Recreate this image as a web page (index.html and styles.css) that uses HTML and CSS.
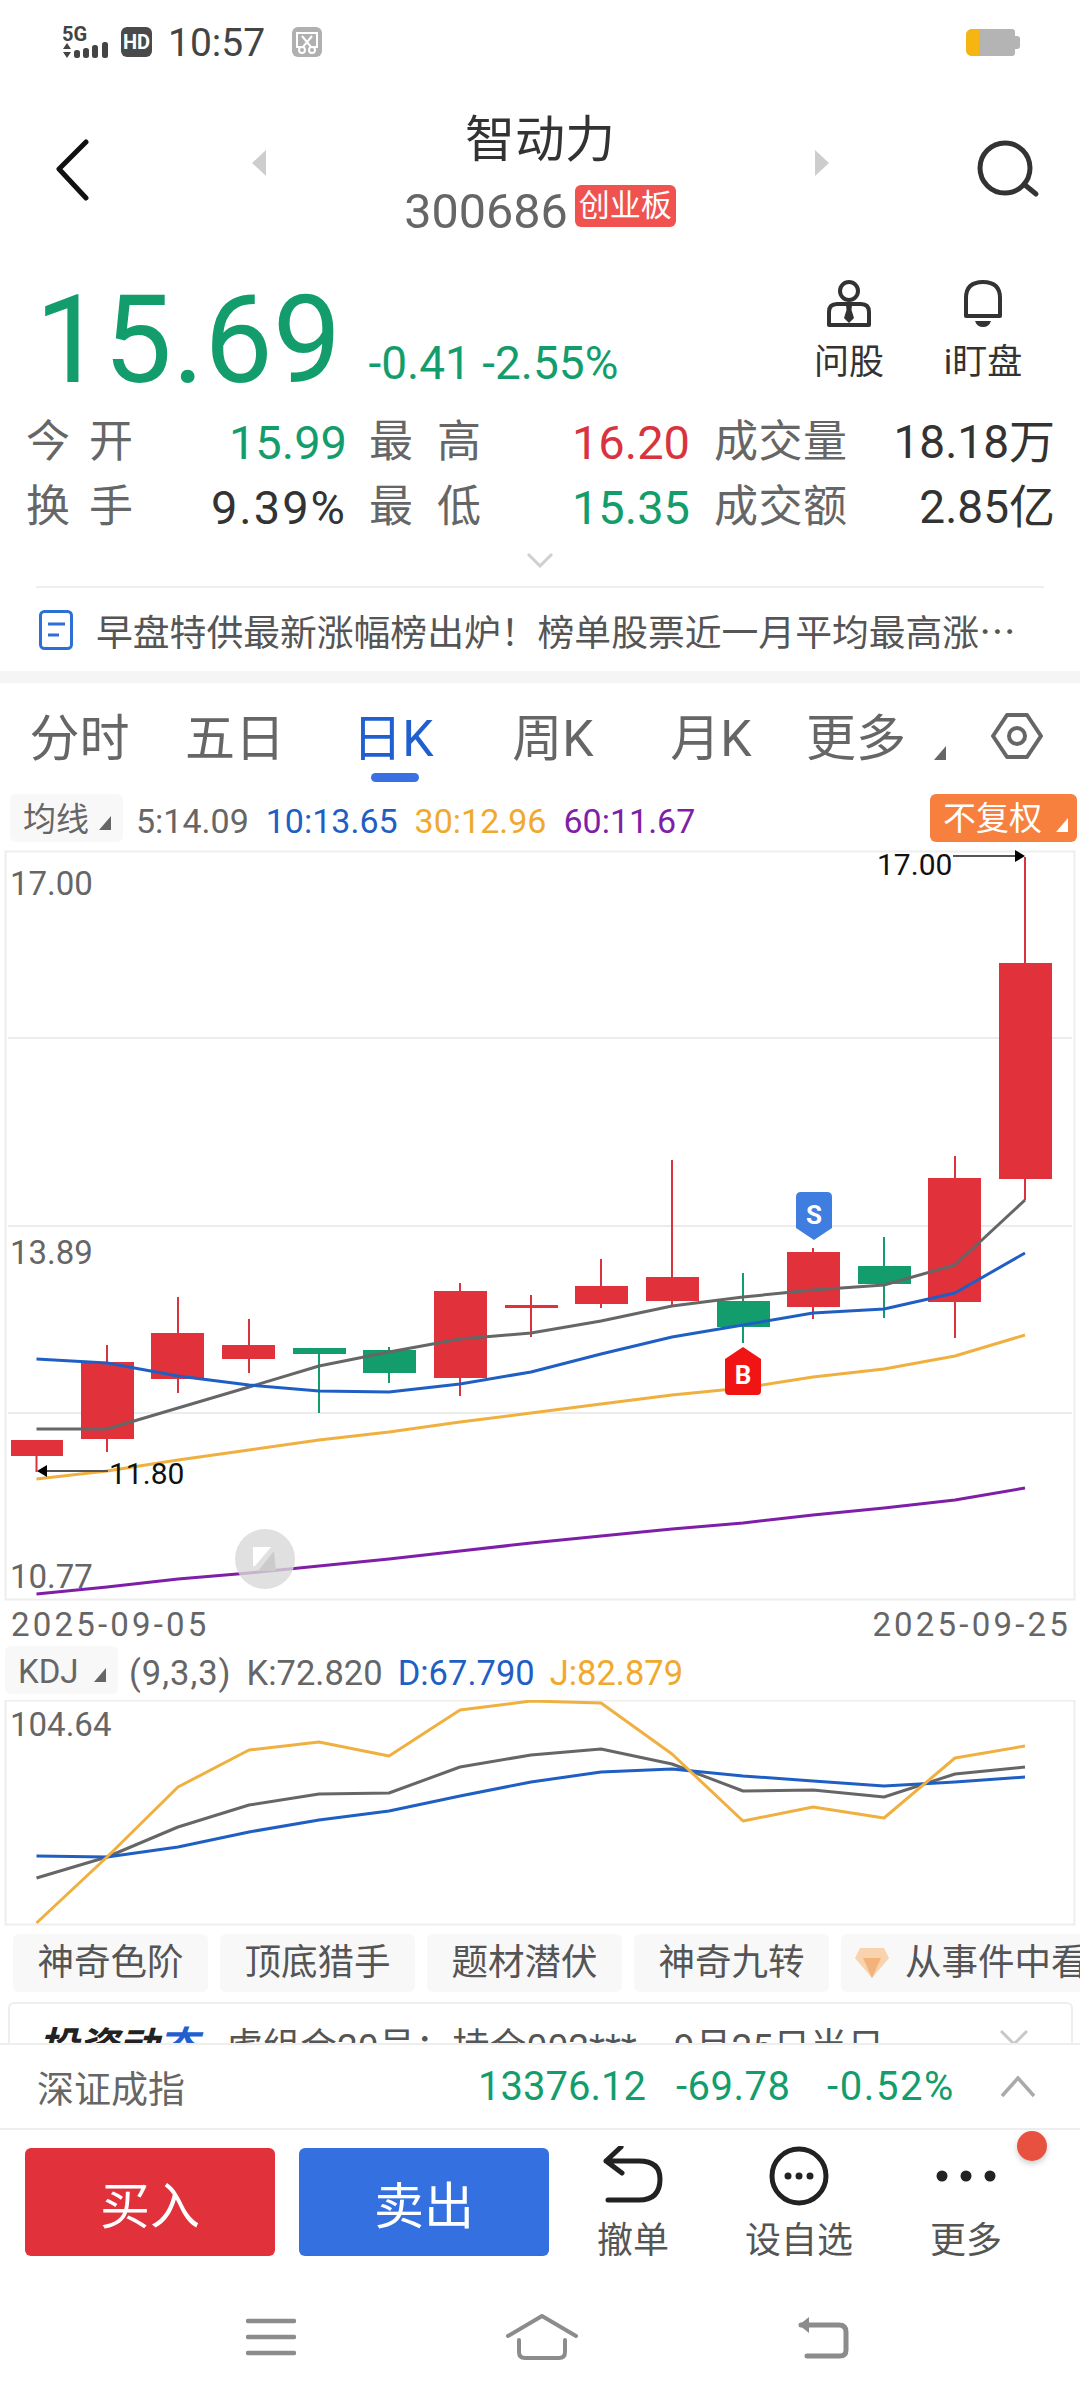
FILE: index.html
```html
<!DOCTYPE html>
<html lang="zh-CN">
<head>
  <meta charset="UTF-8" />
  <title>智动力 300686</title>
  <link rel="stylesheet" href="styles.css">
</head>
<body>

  <div class="status-bar">
    <div class="net">
      <span class="net-five">5G</span>
      <svg class="net-bars" width="48" height="18" viewBox="0 0 48 18">
        <path d="M1 7 L5 1 L9 7 Z M1 10 L9 10 L5 16 Z" fill="#444"/>
        <rect x="12" y="8" width="6" height="8" rx="2.5" fill="#444"/>
        <rect x="21" y="6" width="6" height="10" rx="2.5" fill="#444"/>
        <rect x="30" y="3" width="6" height="13" rx="2.5" fill="#444"/>
        <rect x="40" y="0" width="6" height="16" rx="2.5" fill="#444"/>
      </svg>
    </div>
    <span class="hd">HD</span>
    <span class="clock">10:57</span>
    <svg class="shot" width="30" height="30" viewBox="0 0 30 30">
      <rect width="30" height="30" rx="6" fill="#b0b0b0"/>
      <path d="M9 20 H5 V6 H25 V20 H21" fill="none" stroke="#fff" stroke-width="2"/>
      <path d="M10 9 L19 20 M20 9 L11 20" stroke="#fff" stroke-width="2"/>
      <circle cx="10" cy="23" r="3" fill="none" stroke="#fff" stroke-width="2"/>
      <circle cx="20" cy="23" r="3" fill="none" stroke="#fff" stroke-width="2"/>
    </svg>
    <div class="battery"><div class="battery-level"></div></div>
  </div>

  <div class="top-bar">
    <svg class="back" width="36" height="62" viewBox="0 0 36 62">
      <path d="M31 3 L4 30 L31 59" fill="none" stroke="#111" stroke-width="5" stroke-linecap="round" stroke-linejoin="round"/>
    </svg>
    <span class="tri-left"></span>
    <div class="stock-name">
      <div class="name">智动力</div>
      <div class="code-row"><span class="code">300686</span><span class="board">创业板</span></div>
    </div>
    <span class="tri-right"></span>
    <svg class="search" width="64" height="60" viewBox="0 0 64 60">
      <circle cx="29" cy="29" r="25" fill="none" stroke="#333" stroke-width="5"/>
      <path d="M49 46 L60 55" stroke="#333" stroke-width="5" stroke-linecap="round"/>
    </svg>
  </div>

  <div class="price-row">
    <span class="price">15.69</span>
    <span class="change">-0.41 -2.55%</span>
    <div class="action ask">
      <svg width="48" height="50" viewBox="0 0 48 50">
        <circle cx="24" cy="12" r="9" fill="none" stroke="#333" stroke-width="4"/>
        <path d="M4 46 V33 Q4 25 12 25 H36 Q44 25 44 33 V46 Z" fill="none" stroke="#333" stroke-width="4" stroke-linejoin="round"/>
        <path d="M21 26 H27 L26.5 31 L29 39 L24 44 L19 39 L21.5 31 Z" fill="#333"/>
      </svg>
      <span>问股</span>
    </div>
    <div class="action watch">
      <svg width="40" height="50" viewBox="0 0 40 50">
        <path d="M3 37 V19 Q3 3 20 3 Q37 3 37 19 V37 Z" fill="none" stroke="#333" stroke-width="4" stroke-linejoin="round"/>
        <path d="M12 42 H28 Q26 48 20 48 Q14 48 12 42 Z" fill="#333"/>
      </svg>
      <span>i盯盘</span>
    </div>
  </div>

  <div class="stats">
    <span class="label">今 开</span><span class="value green">15.99</span>
    <span class="label mid">最 高</span><span class="value red">16.20</span>
    <span class="label far">成交量</span><span class="value tight">18.18万</span>
    <span class="label">换 手</span><span class="value wide">9.39%</span>
    <span class="label mid">最 低</span><span class="value green">15.35</span>
    <span class="label far">成交额</span><span class="value tight">2.85亿</span>
  </div>

  <div class="expand">
    <svg width="28" height="16" viewBox="0 0 28 16"><path d="M2 2 L14 14 L26 2" fill="none" stroke="#cfcfcf" stroke-width="3"/></svg>
  </div>

  <div class="news">
    <svg width="34" height="40" viewBox="0 0 34 40">
      <rect x="1.5" y="1.5" width="31" height="37" rx="4" fill="none" stroke="#2e6fd6" stroke-width="3"/>
      <path d="M9 14 H26 M9 25 H20" stroke="#2e6fd6" stroke-width="3"/>
    </svg>
    <span class="news-text">早盘特供最新涨幅榜出炉！榜单股票近一月平均最高涨…</span>
  </div>

  <div class="band"></div>

  <div class="tabs">
    <span class="tab">分时</span>
    <span class="tab">五日</span>
    <span class="tab active">日K</span>
    <span class="tab">周K</span>
    <span class="tab">月K</span>
    <span class="tab more">更多<i class="corner"></i></span>
    <svg class="hex" width="52" height="48" viewBox="0 0 52 48">
      <path d="M16 3 H36 L50 24 L36 45 H16 L2 24 Z" fill="none" stroke="#666" stroke-width="4" stroke-linejoin="round"/>
      <circle cx="26" cy="24" r="8" fill="none" stroke="#666" stroke-width="4"/>
    </svg>
  </div>

  <div class="legend">
    <span class="chip">均线<i class="corner small"></i></span>
    <span class="gray">5:14.09</span>
    <span class="blue">10:13.65</span>
    <span class="orange">30:12.96</span>
    <span class="purple">60:11.67</span>
    <span class="adjust">不复权<i class="corner white"></i></span>
  </div>

  <svg class="kline" width="1080" height="751" viewBox="0 850 1080 751">
    <rect x="5.5" y="851.5" width="1069" height="748" fill="#fff" stroke="#eee" stroke-width="2"/>
    <path d="M8 1038 H1072 M8 1226 H1072 M8 1413 H1072" stroke="#ececec" stroke-width="2"/>

    <g class="up">
      <path d="M36.5 1456 V1472 M107 1345 V1452 M178 1297 V1393 M249 1319 V1373 M460 1283 V1396 M531 1295 V1337 M601 1259 V1308 M672 1160 V1306 M813 1248 V1319 M955 1156 V1338 M1025 857 V1200"/>
      <rect x="11" y="1440" width="52" height="16"/>
      <rect x="81" y="1362" width="53" height="77"/>
      <rect x="151" y="1333" width="53" height="46"/>
      <rect x="222" y="1345" width="53" height="14"/>
      <rect x="434" y="1291" width="53" height="87"/>
      <rect x="505" y="1305" width="53" height="3"/>
      <rect x="575" y="1286" width="53" height="18"/>
      <rect x="646" y="1277" width="53" height="24"/>
      <rect x="787" y="1252" width="53" height="55"/>
      <rect x="928" y="1178" width="53" height="124"/>
      <rect x="999" y="963" width="53" height="216"/>
    </g>
    <g class="down">
      <path d="M319 1348 V1413 M389 1347 V1383 M743 1273 V1343 M884 1237 V1318"/>
      <rect x="293" y="1348" width="53" height="6"/>
      <rect x="363" y="1350" width="53" height="23"/>
      <rect x="717" y="1301" width="53" height="26"/>
      <rect x="858" y="1266" width="53" height="18"/>
    </g>

    <polyline class="ma ma5" points="36.5,1429 107,1429 178,1408 249,1387 319,1366 389,1352 460,1339 531,1333 601,1321 672,1306 743,1297 813,1290 884,1285 955,1265 1025,1200"/>
    <polyline class="ma ma10" points="36.5,1359 107,1363 178,1376 249,1385 319,1391 389,1392 460,1384 531,1372 601,1354 672,1337 743,1325 813,1313 884,1309 955,1293 1025,1253"/>
    <polyline class="ma ma30" points="36.5,1479 107,1471 178,1460 249,1450 319,1440 389,1432 460,1422 531,1413 601,1404 672,1395 743,1388 813,1377 884,1369 955,1356 1025,1335"/>
    <polyline class="ma ma60" points="36.5,1594 107,1587 178,1579 249,1573 319,1566 389,1559 460,1551 531,1543 601,1536 672,1529 743,1523 813,1515 884,1508 955,1500 1025,1488"/>

    <path d="M796 1197 Q796 1192 801 1192 H827 Q832 1192 832 1197 V1228 L814 1240 L796 1228 Z" fill="#3f7de0"/>
    <text class="mark" x="814" y="1224">S</text>
    <path d="M725 1359 L743 1347 L761 1359 V1391 Q761 1395 757 1395 H729 Q725 1395 725 1391 Z" fill="#f01414"/>
    <text class="mark" x="743" y="1384">B</text>

    <text class="axis" x="10" y="895">17.00</text>
    <text class="axis" x="10" y="1264">13.89</text>
    <text class="axis" x="10" y="1588">10.77</text>

    <text class="peak" x="877" y="875">17.00</text>
    <path d="M953 856 H1016" stroke="#555" stroke-width="2"/>
    <path d="M1015 850 L1025 856 L1015 862 Z" fill="#000"/>
    <text class="peak" x="109" y="1484">11.80</text>
    <path d="M108 1471 H46" stroke="#555" stroke-width="2"/>
    <path d="M47 1465 L37 1471 L47 1477 Z" fill="#000"/>

    <circle cx="265" cy="1559" r="30" fill="#d8d8d8" fill-opacity="0.8"/>
    <path d="M253 1547 H271 L255 1566 H253 Z" fill="#fff"/>
    <path d="M274 1551 L276 1571 L258 1571 Z" fill="#cbcbcb"/>
  </svg>

  <div class="dates"><span>2025-09-05</span><span>2025-09-25</span></div>

  <div class="legend kdj-legend">
    <span class="chip">KDJ<i class="corner small"></i></span>
    <span class="gray params">(9,3,3)</span>
    <span class="gray">K:72.820</span>
    <span class="blue">D:67.790</span>
    <span class="orange">J:82.879</span>
  </div>

  <svg class="kdj" width="1080" height="226" viewBox="0 1700 1080 226">
    <rect x="5.5" y="1700.5" width="1069" height="224" fill="#fff" stroke="#eee" stroke-width="2"/>
    <text class="axis" x="10" y="1736">104.64</text>
    <polyline class="ma ma5" points="36.5,1878 107,1857 178,1827 249,1805 319,1794 389,1793 460,1767 531,1755 601,1749 672,1764 743,1791 813,1790 884,1797 955,1774 1025,1767"/>
    <polyline class="ma ma10" points="36.5,1856 107,1857 178,1847 249,1832 319,1820 389,1811 460,1796 531,1782 601,1772 672,1769 743,1776 813,1781 884,1786 955,1782 1025,1777"/>
    <polyline class="ma ma30" points="36.5,1923 107,1857 178,1787 249,1750 319,1742 389,1756 460,1710 531,1701 601,1703 672,1754 743,1821 813,1807 884,1818 955,1758 1025,1746"/>
  </svg>

  <div class="tools">
    <span class="tool">神奇色阶</span>
    <span class="tool">顶底猎手</span>
    <span class="tool">题材潜伏</span>
    <span class="tool">神奇九转</span>
    <span class="tool gem">
      <svg width="34" height="30" viewBox="0 0 34 30"><path d="M5 0 H29 L34 10 L17 30 L0 10 Z" fill="#f8d3ae"/><path d="M8 10 H26 L17 30 Z" fill="#f3b27a"/></svg>
      从事件中看
    </span>
  </div>

  <div class="dynamic">
    <span class="dynamic-title">投资动<em>态</em></span>
    <span class="dynamic-text">虚组合20号：持仓002***，9月25日当日…</span>
    <svg width="30" height="30" viewBox="0 0 30 30"><path d="M2 2 L28 28 M28 2 L2 28" stroke="#c8c8c8" stroke-width="3"/></svg>
  </div>

  <div class="index-row">
    <span class="index-name">深证成指</span>
    <span class="index-num last">13376.12</span>
    <span class="index-num change-num">-69.78</span>
    <span class="index-num pct-num">-0.52%</span>
    <svg width="36" height="22" viewBox="0 0 36 22"><path d="M2 20 L18 2 L34 20" fill="none" stroke="#aaa" stroke-width="3.5"/></svg>
  </div>

  <div class="trade-bar">
    <button class="trade buy">买入</button>
    <button class="trade sell">卖出</button>
    <div class="trade-item undo">
      <svg width="60" height="60" viewBox="0 0 60 60">
        <path d="M3 15 L18 1 M3 15 L19 27 M3 15 H36 Q57 15 57 33 Q57 54 36 54 H5" fill="none" stroke="#222" stroke-width="5" stroke-linecap="round" stroke-linejoin="round"/>
      </svg>
      <span>撤单</span>
    </div>
    <div class="trade-item fav">
      <svg width="60" height="60" viewBox="0 0 60 60">
        <circle cx="30" cy="30" r="27" fill="none" stroke="#222" stroke-width="5"/>
        <circle cx="19" cy="30" r="3.5" fill="#222"/><circle cx="30" cy="30" r="3.5" fill="#222"/><circle cx="41" cy="30" r="3.5" fill="#222"/>
      </svg>
      <span>设自选</span>
    </div>
    <div class="trade-item more-item">
      <svg width="60" height="60" viewBox="0 0 60 60">
        <circle cx="6" cy="30" r="5.5" fill="#222"/><circle cx="30" cy="30" r="5.5" fill="#222"/><circle cx="54" cy="30" r="5.5" fill="#222"/>
      </svg>
      <span>更多</span>
      <i class="dot"></i>
    </div>
  </div>

  <div class="nav-bar">
    <svg class="nav-menu" width="50" height="38" viewBox="0 0 50 38"><path d="M2 3 H48 M2 19 H48 M2 35 H48" stroke="#8c8c8c" stroke-width="4.5" stroke-linecap="round"/></svg>
    <svg class="nav-home" width="72" height="46" viewBox="0 0 72 46"><path d="M2 22 L36 2 L70 22" fill="none" stroke="#8c8c8c" stroke-width="4" stroke-linecap="round" stroke-linejoin="round"/><path d="M13 26 V38 Q13 44 19 44 H53 Q59 44 59 38 V26" fill="none" stroke="#8c8c8c" stroke-width="4" stroke-linecap="round"/></svg>
    <svg class="nav-back" width="54" height="44" viewBox="0 0 54 44"><path d="M4 10 L14 2 V18 Z" fill="#8c8c8c"/><path d="M6 10 H44 Q51 10 51 17 V35 Q51 41 45 41 H12" fill="none" stroke="#8c8c8c" stroke-width="5" stroke-linecap="round"/></svg>
  </div>

</body>
</html>
```

FILE: styles.css
```css
* {
  box-sizing: border-box;
}
body {
  margin: 0;
  width: 1080px;
  height: 2400px;
  overflow: hidden;
  background: #fff;
  color: #333;
  font-family: Roboto, "Noto Sans CJK SC", sans-serif;
}
svg {
  display: block;
}
.green { color: #149d6c; }
.red { color: #d9333d; }
.gray { color: #666; }
.blue { color: #1f5fc4; }
.orange { color: #f0a92e; }
.purple { color: #7f1fa8; }

/* status bar */
.status-bar {
  height: 88px;
  padding: 27px 65px 0 62px;
  display: flex;
  align-items: flex-start;
}
.net {
  width: 48px;
  height: 30px;
}
.net-five {
  display: block;
  font-size: 20px;
  line-height: 15px;
  font-weight: 700;
  color: #444;
}
.hd {
  margin-left: 11px;
  width: 31px;
  height: 30px;
  border-radius: 6px;
  background: #4a4a4a;
  color: #fff;
  font-size: 20px;
  font-weight: 700;
  line-height: 30px;
  text-align: center;
}
.clock {
  margin-left: 16px;
  font-size: 39px;
  line-height: 32px;
  color: #444;
}
.shot {
  margin-left: 27px;
}
.battery {
  position: relative;
  margin-left: auto;
  margin-top: 2px;
  width: 49px;
  height: 27px;
  border-radius: 6px 3px 3px 6px;
  background: #b4b4b4;
}
.battery::after {
  content: "";
  position: absolute;
  left: 49px;
  top: 7px;
  width: 5px;
  height: 13px;
  border-radius: 0 3px 3px 0;
  background: #b4b4b4;
}
.battery-level {
  width: 13px;
  height: 100%;
  border-radius: 6px 0 0 6px;
  background: #f6b511;
}

/* name and code */
.top-bar {
  height: 176px;
  position: relative;
  padding-top: 22px;
  display: flex;
  justify-content: center;
}
.back {
  position: absolute;
  left: 55px;
  top: 51px;
}
.search {
  position: absolute;
  left: 976px;
  top: 51px;
}
.tri-left, .tri-right {
  position: absolute;
  top: 62px;
  border-top: 13px solid transparent;
  border-bottom: 13px solid transparent;
}
.tri-left {
  left: 252px;
  border-right: 14px solid #cdcdcd;
}
.tri-right {
  left: 815px;
  border-left: 14px solid #cdcdcd;
}
.stock-name {
  text-align: center;
}
.name {
  font-size: 50px;
  line-height: 60px;
  color: #333;
}
.code-row {
  margin-top: 18px;
  display: flex;
  align-items: flex-start;
  gap: 7px;
}
.code {
  font-size: 48.5px;
  line-height: 48px;
  color: #666;
}
.board {
  margin-top: -3px;
  width: 101px;
  height: 42px;
  border-radius: 6px;
  background: #f0524f;
  color: #fff;
  font-size: 31px;
  line-height: 42px;
  text-align: center;
}

/* price */
.price-row {
  height: 146px;
  padding-left: 35px;
  position: relative;
  display: flex;
}
.price {
  margin-top: 14px;
  font-size: 122px;
  line-height: 125px;
  color: #149d6c;
}
.change {
  margin-left: 27px;
  margin-top: 74px;
  font-size: 46px;
  line-height: 50px;
  color: #149d6c;
}
.action {
  position: absolute;
  top: 15px;
  display: flex;
  flex-direction: column;
  align-items: center;
  gap: 12px;
  font-size: 35px;
  line-height: 44px;
}
.ask { left: 814px; width: 70px; }
.watch { left: 943px; width: 80px; }

/* quote table */
.stats {
  height: 130px;
  padding-left: 26px;
  display: grid;
  grid-template-columns: 107px 214px 134px 209px 157px 208px;
  grid-auto-rows: 65px;
  align-items: center;
}
.label {
  font-size: 44px;
  line-height: 65px;
  color: #666;
  text-align-last: justify;
}
.mid { margin-left: 22px; }
.far { margin-left: 24px; }
.value {
  font-size: 47px;
  line-height: 65px;
  text-align: right;
}
.value.wide { letter-spacing: 2px; }
.value.tight { font-size: 46px; }

.expand {
  height: 48px;
  border-bottom: 2px solid #eee;
  margin: 0 36px;
  padding-top: 12px;
  display: flex;
  justify-content: center;
  align-items: flex-start;
}
.news {
  height: 83px;
  padding: 0 0 0 39px;
  display: flex;
  align-items: center;
  gap: 23px;
}
.news-text {
  font-family: "Noto Sans CJK SC", sans-serif;
  font-size: 36.8px;
  color: #555;
  white-space: nowrap;
}
.band {
  height: 12px;
  background: #f5f5f5;
}

/* period tabs */
.tabs {
  height: 105px;
  position: relative;
  padding-top: 28px;
  display: grid;
  grid-template-columns: 157px 154px 162px 158px 158px 132px;
  align-items: start;
  padding-left: 1px;
}
.tab {
  position: relative;
  font-size: 50px;
  line-height: 56px;
  text-align: center;
  color: #666;
}
.tab.active {
  color: #1f5fd0;
}
.tab.active::after {
  content: "";
  position: absolute;
  left: 59px;
  top: 62px;
  width: 48px;
  height: 9px;
  border-radius: 5px;
  background: #3a70e2;
}
.corner {
  position: absolute;
  width: 0;
  height: 0;
  border-left: 12px solid transparent;
  border-bottom: 14px solid #666;
}
.more .corner {
  left: 144px;
  top: 35px;
}
.hex {
  position: absolute;
  left: 991px;
  top: 29px;
}

/* indicator legends */
.legend {
  height: 56px;
  margin-top: 6px;
  padding-left: 10px;
  position: relative;
  display: flex;
  align-items: flex-start;
  font-size: 34px;
  line-height: 54px;
  gap: 17px;
}
.legend .chip {
  width: 113px;
  height: 48px;
  margin-right: -4px;
  padding-left: 13px;
  position: relative;
  border-radius: 6px;
  background: #f8f8f8;
  color: #666;
  font-size: 33px;
  line-height: 52px;
}
.corner.small {
  right: 12px;
  bottom: 12px;
}
.adjust {
  position: absolute;
  left: 930px;
  top: 0;
  width: 147px;
  height: 48px;
  padding-left: 13px;
  border-radius: 6px;
  background: #f7803e;
  color: #fff;
  font-size: 33px;
  line-height: 50px;
}
.corner.white {
  right: 9px;
  bottom: 10px;
  border-bottom-color: #fff;
}

/* charts */
.up path { stroke: #d9333d; stroke-width: 2; }
.up rect { fill: #e1313a; }
.down path { stroke: #149d6c; stroke-width: 2; }
.down rect { fill: #149d6c; }
.ma { fill: none; stroke-width: 3; stroke-linejoin: round; }
.ma5 { stroke: #666; }
.ma10 { stroke: #1f5fc4; }
.ma30 { stroke: #f0b040; }
.ma60 { stroke: #7f1fa8; }
.axis { font-size: 33px; fill: #666; }
.peak { font-size: 30px; fill: #111; }
.mark { font-size: 26px; font-weight: 700; fill: #fff; text-anchor: middle; }

.dates {
  height: 43px;
  padding: 4px 9px 0 11px;
  display: flex;
  justify-content: space-between;
  font-size: 33px;
  line-height: 40px;
  letter-spacing: 3.2px;
  color: #666;
}
.kdj-legend {
  margin-top: 2px;
  height: 54px;
  padding-left: 5px;
  gap: 15px;
  font-size: 34.5px;
}
.params {
  letter-spacing: 1px;
}

/* tool chips */
.tools {
  height: 58px;
  margin-top: 8px;
  padding-left: 13px;
  display: flex;
  gap: 12px;
  overflow: hidden;
}
.tool {
  flex: none;
  width: 195px;
  height: 58px;
  border-radius: 6px;
  background: #f8f8f8;
  font-size: 36.5px;
  line-height: 58px;
  text-align: center;
  color: #555;
}
.tool.gem {
  width: 300px;
  padding-left: 14px;
  display: flex;
  align-items: center;
  gap: 16px;
  white-space: nowrap;
}

/* clipped card */
.dynamic {
  height: 41px;
  margin: 10px 7px 0 8px;
  padding: 22px 42px 0 28px;
  border: 2px solid #eee;
  border-bottom: 0;
  border-radius: 6px 6px 0 0;
  display: flex;
  align-items: flex-start;
  overflow: hidden;
}
.dynamic-title {
  font-size: 40px;
  line-height: 44px;
  font-weight: 700;
  font-style: italic;
  color: #222;
}
.dynamic-title em {
  color: #1f5fd0;
}
.dynamic-text {
  margin-left: 28px;
  font-size: 37px;
  line-height: 44px;
  color: #555;
  white-space: nowrap;
}
.dynamic svg {
  margin-left: auto;
  margin-top: 3px;
  flex: none;
}

/* index strip */
.index-row {
  height: 87px;
  padding: 0 44px 0 37px;
  border-top: 2px solid #eee;
  border-bottom: 2px solid #eee;
  display: flex;
  align-items: center;
}
.index-name {
  width: 441px;
  font-size: 37px;
  color: #666;
}
.index-num {
  font-size: 40px;
  color: #149d6c;
}
.last { width: 198px; }
.change-num { width: 151px; letter-spacing: 0.5px; }
.pct-num { letter-spacing: 1.6px; }
.index-row svg {
  margin-left: auto;
}

/* trade bar */
.trade-bar {
  height: 170px;
  padding: 18px 0 0 25px;
  position: relative;
  display: flex;
  align-items: flex-start;
  gap: 24px;
}
.trade {
  width: 250px;
  height: 108px;
  border: none;
  border-radius: 6px;
  color: #fff;
  font-family: inherit;
  font-size: 50px;
  padding: 0;
}
.buy { background: #e1313a; }
.sell { background: #3470e0; }
.trade-item {
  position: absolute;
  top: 16px;
  display: flex;
  flex-direction: column;
  align-items: center;
  font-size: 36px;
  line-height: 44px;
  color: #555;
}
.trade-item svg {
  margin-bottom: 13px;
}
.undo { left: 573px; width: 120px; }
.fav { left: 739px; width: 120px; }
.more-item { left: 906px; width: 120px; }
.dot {
  position: absolute;
  left: 111px;
  top: -15px;
  width: 30px;
  height: 30px;
  border-radius: 50%;
  background: #e8513f;
  box-shadow: 0 3px 6px rgba(0, 0, 0, 0.2);
}

/* system nav */
.nav-bar {
  height: 74px;
  padding-left: 246px;
  display: flex;
  align-items: center;
}
.nav-home { margin-left: 210px; }
.nav-back { margin-left: 217px; }
```
